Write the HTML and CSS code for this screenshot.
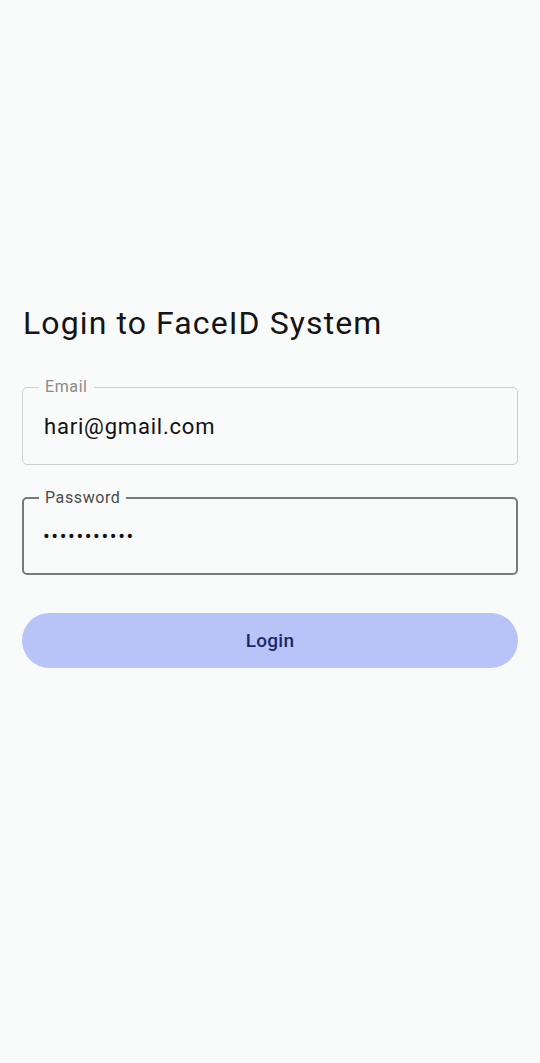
FILE: index.html
```html
<!DOCTYPE html>
<html>
<head>
<meta charset="utf-8">
<link rel="stylesheet" href="styles.css">
</head>
<body>
<main class="page">
  <h1 class="title">Login to FaceID System</h1>
  <form class="form">
    <fieldset class="field">
      <legend class="field-label">Email</legend>
      <div class="field-value">hari@gmail.com</div>
    </fieldset>
    <fieldset class="field field-focused">
      <legend class="field-label">Password</legend>
      <div class="field-value field-dots">•••••••••••</div>
    </fieldset>
    <button type="button" class="btn">Login</button>
  </form>
</main>
</body>
</html>
```
FILE: styles.css
```css
html, body {
  margin: 0;
  padding: 0;
  background: #f9fafa;
}
body {
  font-family: Roboto, "Noto Sans", sans-serif;
  color: #111;
  width: 540px;
  height: 1063px;
}
.page {
  padding: 302px 22px 0 22px;
  display: flex;
  flex-direction: column;
}
.title {
  margin: 0 0 0 1px;
  font-size: 32px;
  font-weight: 400;
  line-height: 42px;
  color: #141414;
  letter-spacing: 1.1px;
}
.form {
  margin-top: 35px;
  display: flex;
  flex-direction: column;
}
.field {
  margin: 0;
  height: 86px;
  box-sizing: border-box;
  border: 1.5px solid #cfcfcf;
  border-radius: 5px;
  padding: 0 21px;
}
.field + .field {
  margin-top: 25px;
}
.field-focused {
  height: 85px;
  border: 2.5px solid #7a7a7a;
  padding: 0 20px;
}
.field-label {
  font-size: 16px;
  color: #8a8a8a;
  padding: 0 6px;
  margin-left: -5px;
  line-height: 16px;
  letter-spacing: 0.6px;
}
.field-focused .field-label {
  color: #4a4a4a;
}
.field-value {
  font-size: 22px;
  line-height: 28px;
  margin-top: 18px;
  color: #111;
  letter-spacing: 0.8px;
}
.field-dots {
  font-size: 20px;
  letter-spacing: 1.6px;
  margin-top: 16px;
  margin-left: -1px;
}
.btn {
  margin-top: 38px;
  height: 55px;
  border: none;
  border-radius: 28px;
  background: #b8c4f8;
  color: #1d2768;
  font-family: Roboto, "Noto Sans", sans-serif;
  font-size: 19px;
  font-weight: 500;
  letter-spacing: 0.3px;
}
```
